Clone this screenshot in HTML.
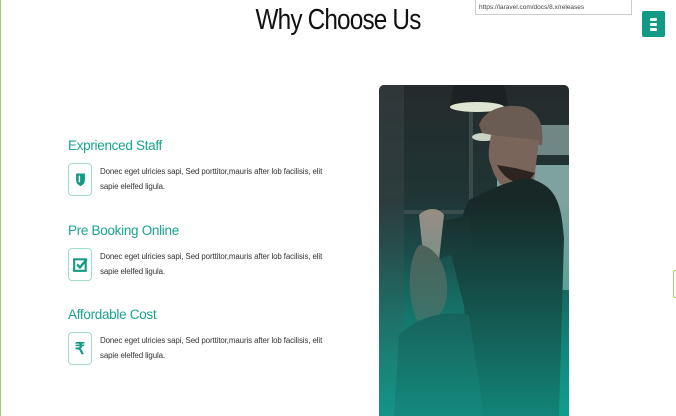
<!DOCTYPE html>
<html><head><style>
*{margin:0;padding:0;box-sizing:border-box}
body{width:676px;height:416px;overflow:hidden;background:#fff;font-family:"Liberation Sans",sans-serif;position:relative}
.lb{position:absolute;left:0;top:0;width:1px;height:416px;background:#9fd36a}
h1{position:absolute;left:0;width:676px;top:4px;text-align:center;font-weight:normal;font-size:29px;color:#111;letter-spacing:-1px;transform:scaleX(.84)}
.inp{position:absolute;left:475px;top:-1px;width:157px;height:16px;border:1px solid #ccc;font-size:6.5px;color:#444;padding:4px 3px}
.btn{position:absolute;left:642px;top:11px;width:23px;height:26px;background:#119a84;border-radius:2px}
.btn i{position:absolute;left:8px;width:7px;height:2.5px;background:#fff;border-radius:1px}
.t{position:absolute;left:68px;font-size:13.5px;color:#1aa38f;letter-spacing:-.3px}
.ic{position:absolute;left:68px;width:24px;height:33px;border:1px solid #9fdcd0;border-radius:4px;display:flex;align-items:center;justify-content:center;color:#119a84;font-weight:bold;font-size:16px}
.p{position:absolute;left:100px;font-size:7.9px;line-height:15px;color:#333;width:235px;letter-spacing:-.1px}
.img{position:absolute;left:379px;top:85px;width:190px;height:331px;border-radius:5px 5px 0 0;overflow:hidden}
.br{position:absolute;left:673px;top:270px;width:4px;height:28px;border:1px solid #9fd36a;border-right:none;border-radius:2px 0 0 2px}
</style></head><body>
<div class="lb"></div>
<h1>Why Choose Us</h1>
<div class="inp">https://laravel.com/docs/8.x/releases</div>
<div class="btn"><i style="top:7px"></i><i style="top:12px"></i><i style="top:17px"></i></div>

<div class="t" style="top:138px">Exprienced Staff</div>
<div class="ic" style="top:163px"><svg width="11" height="15" viewBox="0 0 10 13"><path d="M1 1h8v6c0 3-2 4.5-4 5.5C3 11.5 1 10 1 7z" fill="#119a84"/><path d="M4 3v6" stroke="#fff" stroke-width="1.3"/></svg></div>
<div class="p" style="top:164px">Donec eget ulricies sapi, Sed porttitor,mauris after lob facilisis, elit sapie elelfed ligula.</div>

<div class="t" style="top:223px">Pre Booking Online</div>
<div class="ic" style="top:248px"><svg width="15" height="15" viewBox="0 0 13 13"><rect x="1" y="2" width="10" height="10" fill="none" stroke="#119a84" stroke-width="1.8"/><path d="M3.5 6.5l2.5 2.5 6-7" fill="none" stroke="#119a84" stroke-width="2"/></svg></div>
<div class="p" style="top:249px">Donec eget ulricies sapi, Sed porttitor,mauris after lob facilisis, elit sapie elelfed ligula.</div>

<div class="t" style="top:307px">Affordable Cost</div>
<div class="ic" style="top:332px">₹</div>
<div class="p" style="top:333px">Donec eget ulricies sapi, Sed porttitor,mauris after lob facilisis, elit sapie elelfed ligula.</div>

<div class="img"><svg width="190" height="331" viewBox="0 0 190 331">
<defs>
<linearGradient id="bg" x1="0" y1="0" x2="0" y2="1"><stop offset="0" stop-color="#252a2c"/><stop offset=".5" stop-color="#1d3a3a"/><stop offset="1" stop-color="#0f8a7c"/></linearGradient>
<linearGradient id="ov" x1="0" y1="0" x2="0" y2="1"><stop offset=".35" stop-color="#0f9a8a" stop-opacity="0"/><stop offset="1" stop-color="#10a393" stop-opacity=".75"/></linearGradient>
</defs>
<rect width="190" height="331" fill="url(#bg)"/>
<rect x="0" width="25" height="331" fill="#3a4446" opacity=".5"/>
<rect x="120" y="40" width="70" height="30" fill="#6f8886"/>
<rect x="118" y="80" width="72" height="125" fill="#7ea29f"/>
<rect x="90" y="20" width="4" height="120" fill="#3d4a4a"/>
<rect x="25" y="125" width="70" height="4" fill="#3a4a4a"/>
<path d="M75 0h50l4 20H71z" fill="#1c2224"/>
<ellipse cx="98" cy="22" rx="27" ry="5" fill="#dfe5d3"/>
<ellipse cx="105" cy="52" rx="12" ry="4" fill="#c9d3c6"/>
<path d="M100 40c5-15 25-22 45-18 15 5 20 18 18 38l-60-12z" fill="#6a5b53"/>
<path d="M112 50c-2 12-4 22 0 30 2 8 8 22 18 25l25-10 5-40z" fill="#7a655a"/>
<path d="M118 80c5 10 15 20 30 18l8-10-20-5z" fill="#2d2420"/>
<path d="M90 115c20-10 40-20 60-22 25 8 32 20 35 60l-5 178H95l-10-110-15-60z" fill="#172827"/>
<path d="M45 140c15-5 30-5 45-10l5 35c-15 3-25 5-40 10z" fill="#1a2a29"/>
<path d="M40 130c8-8 20-8 25 0l-5 45-15 3z" fill="#9a8d85"/>
<path d="M40 160c15 0 30 20 28 50-2 20-15 30-30 25-10-20-10-60 2-75z" fill="#5a5650"/>
<path d="M20 250c20-20 50-25 70-20l15 101H15z" fill="#1d3c3c"/>
<rect width="190" height="331" fill="url(#ov)"/>
</svg></div>
<div class="br"></div>
</body></html>
